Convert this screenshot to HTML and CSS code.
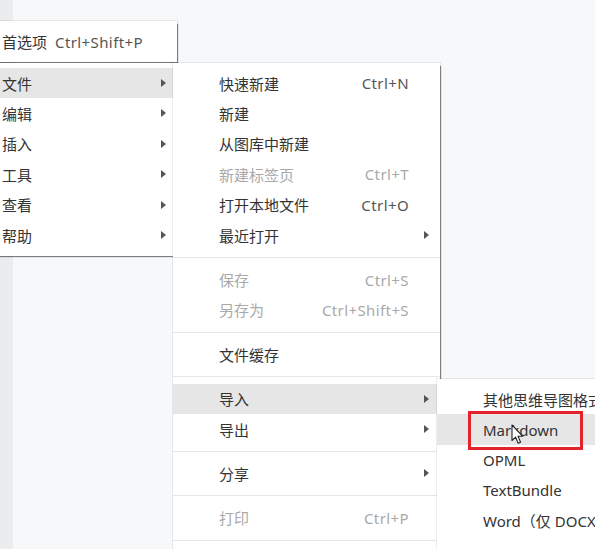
FILE: index.html
```html
<!DOCTYPE html>
<html lang="zh-CN">
<head>
<meta charset="utf-8">
<title>菜单</title>
<link rel="stylesheet" href="styles.css">
</head>
<body>
<div class="desktop">
  <div class="strip"></div>
  <div class="canvas"></div>

  <div class="menu prefs">
    <div class="row"><span class="label">首选项</span><span class="key inline">Ctrl+Shift+P</span></div>
  </div>

  <div class="menu main">
    <div class="row active"><span class="label">文件</span><span class="arrow"></span></div>
    <div class="row"><span class="label">编辑</span><span class="arrow"></span></div>
    <div class="row"><span class="label">插入</span><span class="arrow"></span></div>
    <div class="row"><span class="label">工具</span><span class="arrow"></span></div>
    <div class="row"><span class="label">查看</span><span class="arrow"></span></div>
    <div class="row"><span class="label">帮助</span><span class="arrow"></span></div>
  </div>

  <div class="menu file">
    <div class="row"><span class="label">快速新建</span><span class="key">Ctrl+N</span></div>
    <div class="row"><span class="label">新建</span></div>
    <div class="row"><span class="label">从图库中新建</span></div>
    <div class="row disabled"><span class="label">新建标签页</span><span class="key">Ctrl+T</span></div>
    <div class="row"><span class="label">打开本地文件</span><span class="key">Ctrl+O</span></div>
    <div class="row"><span class="label">最近打开</span><span class="arrow"></span></div>
    <div class="sep"></div>
    <div class="row disabled"><span class="label">保存</span><span class="key">Ctrl+S</span></div>
    <div class="row disabled"><span class="label">另存为</span><span class="key">Ctrl+Shift+S</span></div>
    <div class="sep"></div>
    <div class="row"><span class="label">文件缓存</span></div>
    <div class="sep"></div>
    <div class="row active"><span class="label">导入</span><span class="arrow"></span></div>
    <div class="row"><span class="label">导出</span><span class="arrow"></span></div>
    <div class="sep"></div>
    <div class="row"><span class="label">分享</span><span class="arrow"></span></div>
    <div class="sep"></div>
    <div class="row disabled"><span class="label">打印</span><span class="key">Ctrl+P</span></div>
    <div class="sep"></div>
  </div>

  <div class="menu import">
    <div class="row"><span class="label">其他思维导图格式</span></div>
    <div class="row active"><span class="label">Markdown</span></div>
    <div class="row"><span class="label">OPML</span></div>
    <div class="row"><span class="label">TextBundle</span></div>
    <div class="row"><span class="label">Word（仅 DOCX）</span></div>
  </div>

  <div class="highlight-box"></div>

  <svg class="cursor" width="13" height="21" viewBox="0 0 13 21">
    <path d="M1 1 L1 16.5 L4.6 13.2 L7.2 19.2 L9.6 18.2 L7 12.3 L11.8 12.3 Z" fill="#fff" stroke="#222" stroke-width="1.1" stroke-linejoin="round"/>
  </svg>
</div>
</body>
</html>
```

FILE: styles.css
```css
html, body {
  margin: 0;
  padding: 0;
}

body {
  font-family: "Noto Sans", "Noto Sans CJK SC", sans-serif;
  font-size: 15px;
  color: #333;
  background: #f7f8fa;
}

.desktop {
  position: relative;
  width: 595px;
  height: 549px;
  overflow: hidden;
  display: flex;
}

.strip {
  width: 13px;
  background: #eaecee;
}

.canvas {
  flex: 1;
  background: #f7f8fa;
}

.menu {
  position: absolute;
  background: #fff;
  box-sizing: border-box;
  box-shadow: 0 0 0 1px rgba(0, 0, 0, 0.07), 2px 2px 1px -1px rgba(0, 0, 0, 0.45);
}

.row {
  height: 30.4px;
  display: flex;
  align-items: center;
  white-space: nowrap;
  position: relative;
}

.row.active {
  background: #e6e6e6;
}

.row.disabled {
  color: #a9a9a9;
}

.label {
  font-family: "Noto Sans", "Noto Sans CJK SC", sans-serif;
}

.key {
  margin-left: auto;
  color: #555;
  letter-spacing: 0.4px;
}

.row.disabled .key {
  color: #a9a9a9;
}

.key.inline {
  margin-left: 8px;
}

.arrow {
  position: absolute;
  width: 0;
  height: 0;
  border-left: 5px solid #555;
  border-top: 4px solid transparent;
  border-bottom: 4px solid transparent;
  top: 11px;
}

.sep {
  height: 1px;
  background: #e6e6e6;
  margin: 6.5px 0;
}

/* Preferences */
.prefs {
  left: -10px;
  top: 21px;
  width: 187px;
  height: 41px;
  padding-left: 12px;
}

.prefs .row {
  height: 41px;
}

.prefs .key {
  color: #555;
}

/* Main menu */
.main {
  left: -10px;
  top: 63px;
  width: 183px;
  padding: 5px 0 6px;
  z-index: 1;
}

.main .row {
  padding-left: 12px;
}

.main .arrow {
  right: 7px;
}

/* File submenu */
.file {
  left: 173px;
  top: 63px;
  width: 267px;
  height: 520px;
  padding-top: 5px;
  z-index: 2;
}

.file .row {
  padding-left: 46px;
  padding-right: 31px;
}

.file .arrow {
  right: 11px;
}

/* Import submenu */
.import {
  left: 437px;
  top: 379px;
  width: 220px;
  height: 200px;
  padding-top: 5px;
  z-index: 3;
}

.import .row {
  padding-left: 46px;
}

.highlight-box {
  position: absolute;
  left: 468px;
  top: 411px;
  width: 115px;
  height: 39px;
  box-sizing: border-box;
  border: 3px solid #e3222b;
  z-index: 4;
}

.cursor {
  position: absolute;
  left: 511px;
  top: 424px;
  z-index: 5;
}
```
